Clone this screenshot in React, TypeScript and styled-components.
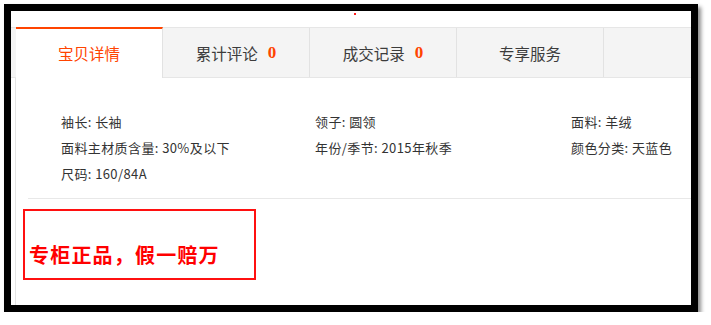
import styled, { createGlobalStyle } from "styled-components";

const GlobalStyle = createGlobalStyle`
  html, body {
    margin: 0;
    padding: 0;
    background: #fff;
  }

  body {
    font-family: "Noto Sans CJK SC", "Liberation Sans", sans-serif;
  }
`;

const Frame = styled.div`
  margin: 4px 0 0 4px;
  width: 680px;
  height: 294px;
  border: 7px solid #000;
  background: #fff;
  box-shadow: 3px 3px 4px rgba(0, 0, 0, 0.45);
  display: flex;
  flex-direction: column;
  overflow: hidden;
`;

const TopStrip = styled.div`
  height: 16px;
  display: flex;
  justify-content: center;
  padding-left: 7px;
`;

const Dot = styled.span`
  width: 2px;
  height: 2px;
  margin-top: 2px;
  background: #ff2020;
`;

const TabBar = styled.div`
  display: flex;
  height: 49px;
  padding-left: 5px;
  background: #f4f4f4;
  border-top: 1px solid #e6e6e6;
  border-bottom: 1px solid #e6e6e6;
`;

const Tab = styled.div<{ $active?: boolean }>`
  width: 147px;
  display: flex;
  align-items: center;
  justify-content: center;
  gap: 10px;
  border-right: 1px solid #e2e2e2;
  font-size: 15.5px;
  color: ${(p) => (p.$active ? "#ff4400" : "#3c3c3c")};
  background: ${(p) => (p.$active ? "#fff" : "transparent")};
  margin: ${(p) => (p.$active ? "-1px 0 -1px" : "0")};
  border-top: ${(p) => (p.$active ? "2px solid #ff4400" : "0")};
  box-sizing: border-box;
  padding-bottom: ${(p) => (p.$active ? "1px" : "0")};
`;

const Count = styled.span`
  font-family: "Liberation Serif", serif;
  font-weight: bold;
  font-size: 17px;
  color: #ff4400;
`;

const Content = styled.div`
  flex: 1;
  margin-left: 4px;
  border-left: 1px solid #e4e4e4;
  display: flex;
  flex-direction: column;
`;

const Attributes = styled.div`
  display: grid;
  grid-template-columns: 254px 256px 1fr;
  grid-auto-rows: 26px;
  padding: 31px 0 11px 33px;
  margin-left: 12px;
  border-bottom: 1px solid #e8e8e8;
`;

const Attr = styled.div`
  font-size: 13px;
  letter-spacing: 0.4px;
  line-height: 26px;
  color: #333;
  white-space: nowrap;
`;

const PromoBox = styled.div`
  margin: 10px 0 0 7px;
  width: 225px;
  height: 37px;
  border: 2px solid #ff1010;
  padding: 30px 0 0 4px;
`;

const PromoText = styled.div`
  font-size: 20px;
  line-height: 28px;
  font-weight: bold;
  color: #ff0000;
  letter-spacing: 1.2px;
  white-space: nowrap;
`;

const tabs = [
  { label: "宝贝详情" },
  { label: "累计评论", count: 0 },
  { label: "成交记录", count: 0 },
  { label: "专享服务" },
];

const attrs = [
  "袖长: 长袖",
  "领子: 圆领",
  "面料: 羊绒",
  "面料主材质含量: 30%及以下",
  "年份/季节: 2015年秋季",
  "颜色分类: 天蓝色",
  "尺码: 160/84A",
];

export default function App() {
  return (
    <>
      <GlobalStyle />
      <Frame>
        <TopStrip>
          <Dot />
        </TopStrip>
        <TabBar>
          {tabs.map((t, i) => (
            <Tab key={t.label} $active={i === 0}>
              {t.label}
              {t.count !== undefined && <Count>{t.count}</Count>}
            </Tab>
          ))}
        </TabBar>
        <Content>
          <Attributes>
            {attrs.map((a) => (
              <Attr key={a}>{a}</Attr>
            ))}
          </Attributes>
          <PromoBox>
            <PromoText>专柜正品，假一赔万</PromoText>
          </PromoBox>
        </Content>
      </Frame>
    </>
  );
}
